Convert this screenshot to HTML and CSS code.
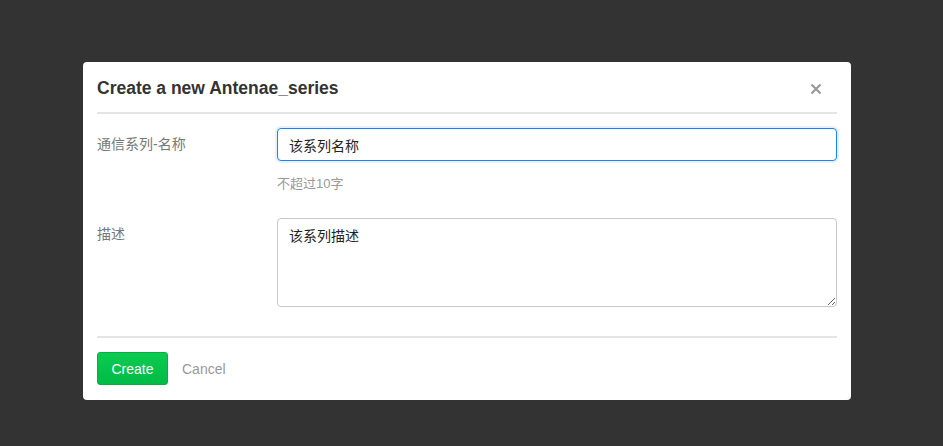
FILE: index.html
```html
<!DOCTYPE html>
<html lang="zh">
<head>
<meta charset="utf-8">
<title>Create a new Antenae_series</title>
<link rel="stylesheet" href="styles.css">
</head>
<body>
<div class="modal">
  <div class="modal-header">
    <h3 class="modal-title">Create a new Antenae_series</h3>
    <svg class="close" width="12" height="12" viewBox="0 0 12 12"><path d="M1.5 1.5L10.5 10.5M10.5 1.5L1.5 10.5" stroke="#999" stroke-width="2.2" fill="none"/></svg>
  </div>
  <div class="modal-body">
    <div class="form-row">
      <label class="form-label">通信系列-名称</label>
      <div class="form-field">
        <input class="text-input focus" type="text" value="该系列名称">
        <div class="help">不超过10字</div>
      </div>
    </div>
    <div class="form-row row-desc">
      <label class="form-label">描述</label>
      <div class="form-field">
        <textarea class="text-area">该系列描述</textarea>
      </div>
    </div>
  </div>
  <div class="modal-footer">
    <button class="btn-create">Create</button>
    <span class="btn-cancel">Cancel</span>
  </div>
</div>
</body>
</html>
```
FILE: styles.css
```css
html, body {
  margin: 0;
  padding: 0;
  background: #333333;
  height: 100%;
}
body {
  font-family: "Liberation Sans", Arial, "Noto Sans CJK SC", sans-serif;
  padding-top: 62px;
  box-sizing: border-box;
}
.modal {
  margin-left: 83px;
  width: 768px;
  height: 338px;
  box-sizing: border-box;
  background: #ffffff;
  border-radius: 4px;
  padding: 0 14px;
}
.modal-header {
  display: flex;
  justify-content: space-between;
  align-items: center;
  height: 52px;
  padding-top: 1px;
  box-sizing: border-box;
  border-bottom: 2px solid #e5e5e5;
}
.modal-title {
  margin: 0;
  font-size: 17.5px;
  font-weight: bold;
  color: #333;
  line-height: 24px;
}
.close {
  margin-right: 15px;
  margin-top: 2px;
}
.modal-body {
  padding-top: 14px;
  border-bottom: 2px solid #e5e5e5;
  padding-bottom: 29px;
}
.form-row {
  display: flex;
}
.row-desc {
  margin-top: 26px;
}
.form-label {
  width: 180px;
  flex: none;
  font-size: 14px;
  color: #777;
  padding-top: 7px;
  line-height: 18px;
  font-family: "Liberation Sans", "Noto Sans CJK SC", sans-serif;
}
.form-field {
  flex: 1;
  display: flex;
  flex-direction: column;
}
.text-input {
  height: 33px;
  box-sizing: border-box;
  border: 1px solid #1a82f7;
  border-radius: 4px;
  box-shadow: 0 0 0 2px #e6f1fd;
  padding: 0 11px;
  font-size: 14px;
  color: #222;
  font-family: "Liberation Sans", "Noto Sans CJK SC", sans-serif;
  outline: none;
}
.help {
  font-size: 13px;
  color: #999;
  margin-top: 14px;
  line-height: 17px;
  font-family: "Liberation Sans", "Noto Sans CJK SC", sans-serif;
}
.text-area {
  height: 89px;
  box-sizing: border-box;
  border: 1px solid #c8c8c8;
  border-radius: 4px;
  padding: 7px 11px;
  font-size: 14px;
  line-height: 20px;
  color: #222;
  font-family: "Liberation Sans", "Noto Sans CJK SC", sans-serif;
  resize: vertical;
  outline: none;
}
.modal-footer {
  display: flex;
  align-items: center;
  padding-top: 14px;
}
.btn-create {
  width: 71px;
  height: 33px;
  background: linear-gradient(#0ccb51, #00bb45);
  border: 1px solid #08ad44;
  border-radius: 3px;
  color: #fff;
  font-size: 14px;
  font-family: "Liberation Sans", Arial, sans-serif;
  padding: 0;
}
.btn-cancel {
  margin-left: 14px;
  font-size: 14px;
  color: #999;
}
```
